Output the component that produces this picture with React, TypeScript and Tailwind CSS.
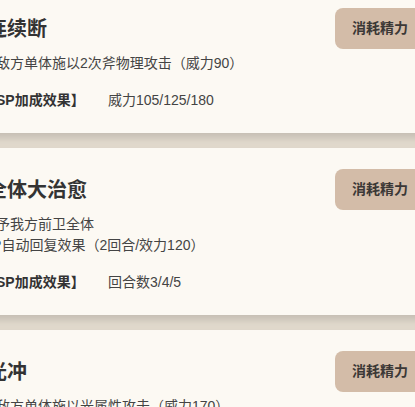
import React from "react";

type Skill = {
  title: string;
  desc: string[];
  spValue: string;
};

const skills: Skill[] = [
  { title: "连续断", desc: ["对敌方单体施以2次斧物理攻击（威力90）"], spValue: "威力105/125/180" },
  { title: "全体大治愈", desc: ["给予我方前卫全体", "HP自动回复效果（2回合/效力120）"], spValue: "回合数3/4/5" },
  { title: "光冲", desc: ["对敌方单体施以光属性攻击（威力170）"], spValue: "威力195/220/290" },
];

function Card({ s }: { s: Skill }) {
  return (
    <div className="bg-[#fcf9f3] shadow-[0_5px_10px_rgba(0,0,0,0.16)] pl-[22px] pr-[25px] pt-[21px] pb-[22px]">
      <div className="flex items-center justify-between h-[41px]">
        <div className="ml-[5px] text-[20px] font-bold leading-none text-[#333333]">{s.title}</div>
        <div className="h-[41px] px-[17px] flex items-center rounded-lg bg-[#d3bca8] text-[14px] font-bold text-[#3b3836]">
          消耗精力
        </div>
      </div>
      <div className="mt-[4px] text-[14px] leading-[21px] text-[#444444]">
        {s.desc.map((d, i) => (
          <div key={i}>{d}</div>
        ))}
      </div>
      <div className="mt-[16px] flex text-[14px] leading-[21px]">
        <div className="w-[126px] font-bold text-[#333333]">【SP加成效果】</div>
        <div className="text-[#444444]">{s.spValue}</div>
      </div>
    </div>
  );
}

export default function App() {
  return (
    <div className="w-[415px] h-[407px] overflow-hidden bg-[#e6ded1] font-['Liberation_Sans','Noto_Sans_CJK_SC',sans-serif]">
      <div className="-mt-[13px] -ml-[40px] w-[490px] flex flex-col gap-[15px]">
        {skills.map((s, i) => (
          <Card key={i} s={s} />
        ))}
      </div>
    </div>
  );
}
